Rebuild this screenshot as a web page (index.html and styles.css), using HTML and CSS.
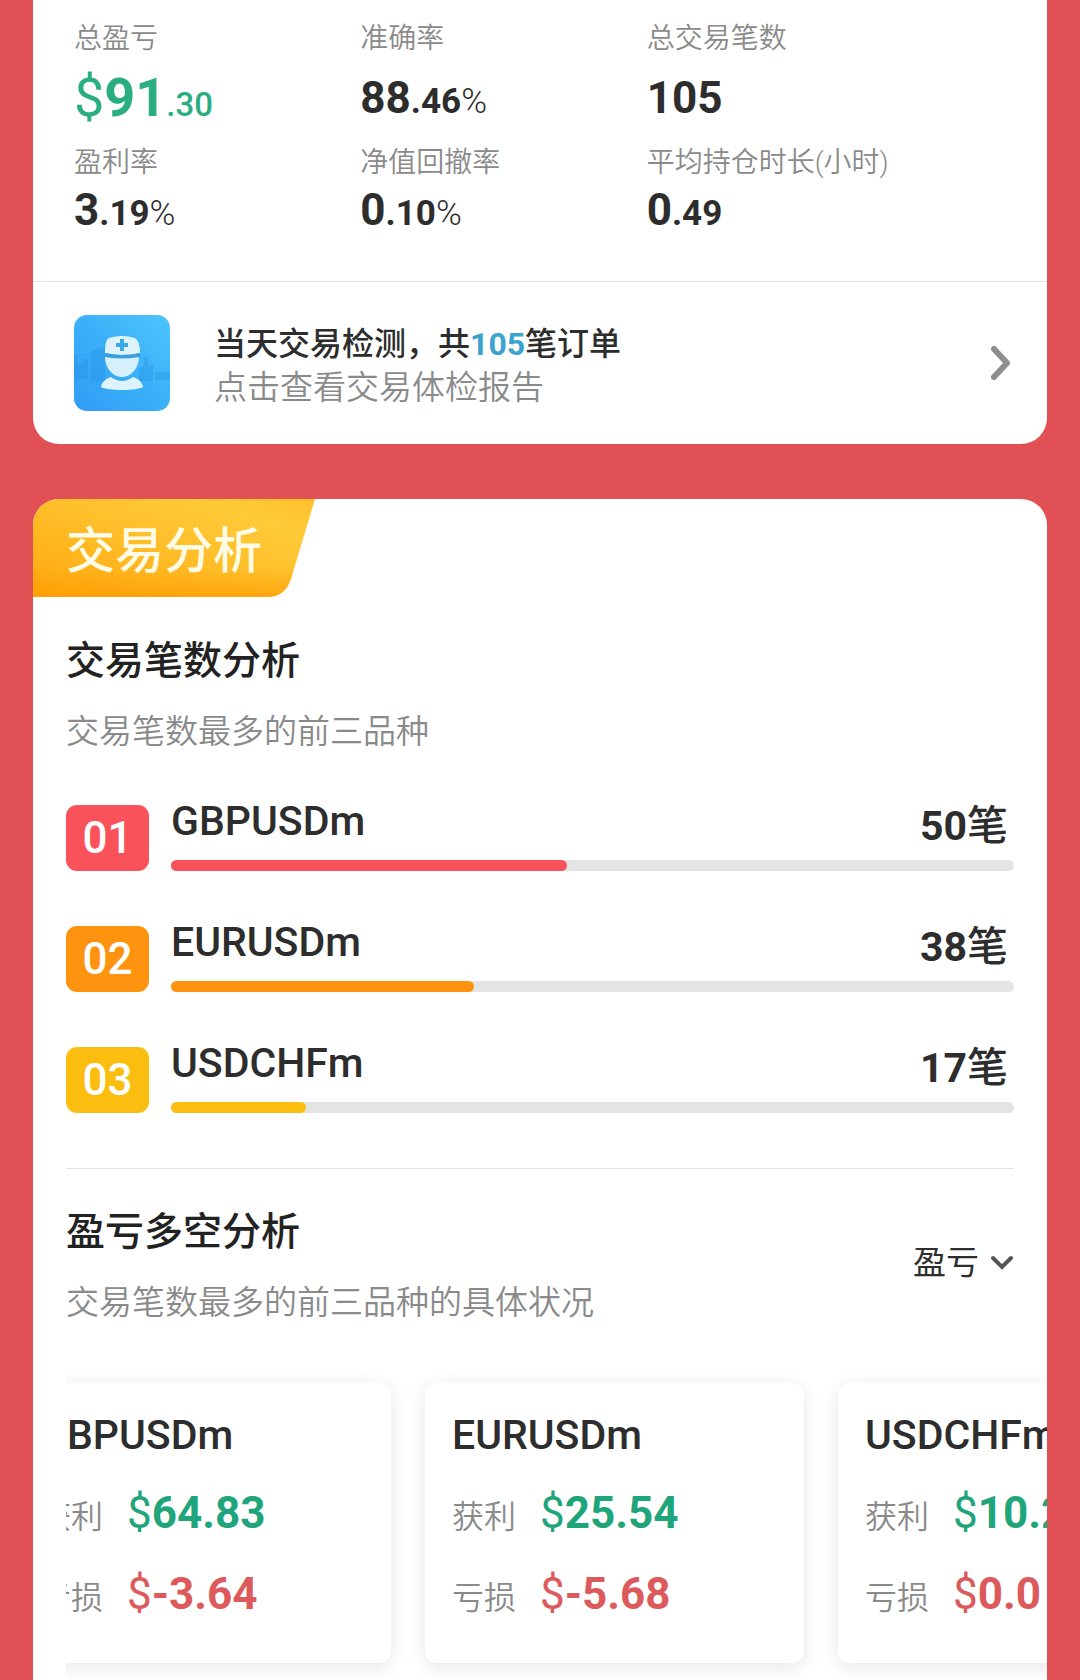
FILE: index.html
```
<!DOCTYPE html>
<html lang="zh-CN">
<head>
    <meta charset="UTF-8">
    <meta name="viewport" content="width=device-width, initial-scale=1.0">
    <title>交易分析</title>
    <link rel="stylesheet" href="styles.css">
</head>
<body>
    <main class="page">
        <section class="card summary">
            <dl class="stats">
                <div class="stat">
                    <dt>总盈亏</dt>
                    <dd class="tall total"><span class="sign">$</span>91<small>.30</small></dd>
                </div>
                <div class="stat">
                    <dt>准确率</dt>
                    <dd class="tall">88<small>.46<i>%</i></small></dd>
                </div>
                <div class="stat">
                    <dt>总交易笔数</dt>
                    <dd class="tall">105</dd>
                </div>
                <div class="stat">
                    <dt>盈利率</dt>
                    <dd>3<small>.19<i>%</i></small></dd>
                </div>
                <div class="stat">
                    <dt>净值回撤率</dt>
                    <dd>0<small>.10<i>%</i></small></dd>
                </div>
                <div class="stat">
                    <dt>平均持仓时长(小时)</dt>
                    <dd>0<small>.49</small></dd>
                </div>
            </dl>

            <a class="report" href="#report">
                <svg class="report-icon" viewBox="0 0 96 96" aria-hidden="true">
                    <defs>
                        <linearGradient id="sky" x1="1" y1="0" x2="0" y2="1">
                            <stop offset="0" stop-color="#4cc5fd"/>
                            <stop offset="0.5" stop-color="#3bb0f8"/>
                            <stop offset="1" stop-color="#2f9cf6"/>
                        </linearGradient>
                    </defs>
                    <rect width="96" height="96" rx="13" fill="url(#sky)"/>
                    <path d="M0 40h4v8h5v-4h5v20H0zM17 35l14-2v34H17zM65 54l5-4v-8h4v8h5v16H65zM81 57h15v8H81z" fill="#2389e0" opacity=".3"/>
                    <path d="M31 38c0-9 1-13 4-15q13-4 26 0c3 2 5 7 5 15q-17 4-35 0z" fill="#dff3fc"/>
                    <path d="M46 24h4v4h4v4h-4v4h-4v-4h-4v-4h4z" fill="#3aa9e6"/>
                    <path d="M31 38q17 4 35 0v5H31z" fill="#3c9fdc"/>
                    <path d="M31 42q17 3 34 0c0 10-7 20-17 20s-17-10-17-20z" fill="#d5effb"/>
                    <path d="M37 62q11 8 22 0c6 2 9 5 10 10-6 4-36 4-42 0 1-5 4-8 10-10z" fill="#dff3fc"/>
                </svg>
                <div class="report-text">
                    <strong>当天交易检测，共<em>105</em>笔订单</strong>
                    <span>点击查看交易体检报告</span>
                </div>
                <svg class="arrow" viewBox="0 0 20 34" aria-hidden="true">
                    <path d="M3 3l13 14L3 31"/>
                </svg>
            </a>
        </section>

        <section class="card analysis">
            <div class="ribbon">
                <svg class="ribbon-bg" viewBox="0 0 282 98" preserveAspectRatio="none" aria-hidden="true">
                    <defs>
                        <linearGradient id="gold" x1="0" y1="1" x2="1" y2="0">
                            <stop offset="0" stop-color="#ffa80e"/>
                            <stop offset="0.5" stop-color="#ffbf2a"/>
                            <stop offset="0.8" stop-color="#ffca38"/>
                            <stop offset="1" stop-color="#ffc02a"/>
                        </linearGradient>
                        <linearGradient id="goldEdge" x1="0" y1="0" x2="0" y2="1">
                            <stop offset="0.7" stop-color="#ff9a00" stop-opacity="0"/>
                            <stop offset="1" stop-color="#ff9a00" stop-opacity=".6"/>
                        </linearGradient>
                    </defs>
                    <path d="M0 0H282L258 80Q252 98 234 98H0z" fill="url(#gold)"/>
                    <path d="M0 0H282L258 80Q252 98 234 98H0z" fill="url(#goldEdge)"/>
                </svg>
                <h1>交易分析</h1>
            </div>

            <div class="block">
                <h2>交易笔数分析</h2>
                <p class="hint">交易笔数最多的前三品种</p>

                <ol class="ranks">
                    <li class="rank red">
                        <span class="badge">01</span>
                        <div class="rank-body">
                            <div class="rank-line"><b>GBPUSDm</b><span><strong>50</strong>笔</span></div>
                            <div class="bar"><div class="fill" style="width: 47%"></div></div>
                        </div>
                    </li>
                    <li class="rank orange">
                        <span class="badge">02</span>
                        <div class="rank-body">
                            <div class="rank-line"><b>EURUSDm</b><span><strong>38</strong>笔</span></div>
                            <div class="bar"><div class="fill" style="width: 36%"></div></div>
                        </div>
                    </li>
                    <li class="rank yellow">
                        <span class="badge">03</span>
                        <div class="rank-body">
                            <div class="rank-line"><b>USDCHFm</b><span><strong>17</strong>笔</span></div>
                            <div class="bar"><div class="fill" style="width: 16%"></div></div>
                        </div>
                    </li>
                </ol>
            </div>

            <div class="block split">
                <div>
                    <h2>盈亏多空分析</h2>
                    <p class="hint">交易笔数最多的前三品种的具体状况</p>
                </div>
                <label class="picker">
                    <select aria-label="分析类型">
                        <option>盈亏</option>
                        <option>多空</option>
                    </select>
                    <svg viewBox="0 0 24 16" aria-hidden="true">
                        <path d="M3 3l9 9 9-9"/>
                    </svg>
                </label>
            </div>

            <div class="scroller" id="scroller">
                <article class="symbol">
                    <h3>GBPUSDm</h3>
                    <p class="gain"><span>获利</span><b><i>$</i>64.83</b></p>
                    <p class="loss"><span>亏损</span><b><i>$</i>-3.64</b></p>
                </article>
                <article class="symbol">
                    <h3>EURUSDm</h3>
                    <p class="gain"><span>获利</span><b><i>$</i>25.54</b></p>
                    <p class="loss"><span>亏损</span><b><i>$</i>-5.68</b></p>
                </article>
                <article class="symbol">
                    <h3>USDCHFm</h3>
                    <p class="gain"><span>获利</span><b><i>$</i>10.2</b></p>
                    <p class="loss"><span>亏损</span><b><i>$</i>0.0</b></p>
                </article>
            </div>
        </section>
    </main>

    <script>
        // 默认滚动到第二个品种
        document.getElementById('scroller').scrollLeft = 54;
    </script>
</body>
</html>
```
FILE: styles.css
```
:root {
    --red: #e15054;
    --text: #2d2d2d;
    --muted: #8a8a8a;
    --green: #1fa57b;
    --line: #e2e2e2;
}

* {
    box-sizing: border-box;
    margin: 0;
    padding: 0;
}

body {
    font-family: Roboto, "Noto Sans CJK SC", sans-serif;
    background: var(--red);
    color: var(--text);
}

.page {
    display: flex;
    flex-direction: column;
    gap: 55px;
    min-height: 100vh;
    padding: 0 33px;
}

.card {
    background: #fff;
    overflow: hidden;
}

/* 顶部汇总 */
.summary {
    border-radius: 0 0 26px 26px;
}

.stats {
    display: grid;
    grid-template-columns: repeat(3, 1fr);
    padding: 16px 114px 47px 41px;
}

.stat dt {
    font-size: 28px;
    font-weight: 350;
    line-height: 46px;
    color: var(--muted);
    white-space: nowrap;
}

.stat dd {
    height: 48px;
    font-size: 44px;
    font-weight: 700;
    line-height: 48px;
    white-space: nowrap;
}

.stat dd.tall {
    height: 78px;
    line-height: 72px;
}

.stat small {
    font-size: 35px;
}

.stat i {
    font-style: normal;
    font-weight: 300;
}

.stat dd.total {
    font-size: 54px;
    color: #2aae81;
}

.total .sign {
    font-weight: 400;
}

.total small {
    font-size: 33px;
    font-weight: 500;
}

.report {
    display: flex;
    align-items: center;
    padding: 33px 36px 33px 41px;
    border-top: 1px solid var(--line);
    color: inherit;
    text-decoration: none;
}

.report-icon {
    width: 96px;
    height: 96px;
}

.report-text {
    flex: 1;
    margin-left: 44px;
    padding-top: 5px;
    line-height: 44px;
}

.report-text strong,
.report-text span {
    display: block;
}

.report-text strong {
    font-size: 32px;
    font-weight: 500;
}

.report-text em {
    font-style: normal;
    font-weight: 700;
    color: #3ba3d0;
}

.report-text span {
    font-size: 33px;
    font-weight: 350;
    color: var(--muted);
}

.arrow {
    width: 20px;
    height: 34px;
    fill: none;
    stroke: #8e8e8e;
    stroke-width: 6;
    stroke-linecap: round;
    stroke-linejoin: round;
}

/* 交易分析 */
.analysis {
    flex: 1;
    border-radius: 26px 26px 0 0;
}

.ribbon {
    position: relative;
    width: 282px;
    height: 98px;
    padding-left: 33px;
}

.ribbon-bg {
    position: absolute;
    inset: 0;
    width: 100%;
    height: 100%;
}

.ribbon h1 {
    position: relative;
    font-size: 49px;
    font-weight: 500;
    line-height: 106px;
    color: #fffbe6;
}

.block {
    margin: 0 33px;
    padding: 33px 0 55px;
}

h2 {
    font-size: 39px;
    font-weight: 500;
    line-height: 62px;
    color: #222;
}

.hint {
    margin-top: 18px;
    font-size: 33px;
    font-weight: 350;
    line-height: 44px;
    color: var(--muted);
}

.ranks {
    display: flex;
    flex-direction: column;
    gap: 55px;
    margin-top: 51px;
    list-style: none;
}

.rank {
    display: flex;
    gap: 22px;
}

.badge {
    width: 83px;
    height: 66px;
    border-radius: 11px;
    background: var(--color);
    color: #fff;
    font-size: 44px;
    font-weight: 500;
    line-height: 66px;
    text-align: center;
}

.rank-body {
    flex: 1;
}

.rank-line {
    display: flex;
    justify-content: space-between;
    height: 55px;
    padding-right: 6px;
    font-size: 41px;
    font-weight: 500;
}

.rank-line b {
    font-weight: 500;
    line-height: 32px;
}

.rank-line span {
    line-height: 42px;
}

.bar {
    height: 11px;
    border-radius: 6px;
    background: #e4e4e4;
}

.fill {
    height: 100%;
    border-radius: 6px;
    background: var(--color);
}

.red {
    --color: #f9525a;
}

.orange {
    --color: #fd930f;
}

.yellow {
    --color: #fbbe10;
}

.split {
    display: flex;
    align-items: center;
    justify-content: space-between;
    padding: 32px 0 38px;
    border-top: 1px solid var(--line);
}

.picker {
    display: flex;
    align-items: center;
    gap: 11px;
}

.picker select {
    appearance: none;
    border: 0;
    background: none;
    font-family: inherit;
    font-size: 33px;
    line-height: 44px;
    color: var(--text);
}

.picker svg {
    width: 24px;
    height: 16px;
    fill: none;
    stroke: #555;
    stroke-width: 4;
    stroke-linecap: round;
}

/* 品种卡片，横向滚动 */
.scroller {
    display: flex;
    gap: 34px;
    margin-left: 33px;
    padding: 20px 33px 17px 0;
    overflow-x: auto;
    scrollbar-width: none;
}

.symbol {
    flex: 0 0 379px;
    padding: 28px 27px 28px;
    border-radius: 12px;
    background: #fff;
    box-shadow: 0 4px 18px rgba(0, 0, 0, 0.1);
}

.symbol h3 {
    margin-bottom: 14px;
    font-size: 41px;
    font-weight: 500;
    line-height: 48px;
}

.symbol p {
    display: flex;
    align-items: baseline;
    gap: 24px;
    height: 81px;
    line-height: 81px;
}

.symbol span {
    font-size: 32px;
    font-weight: 350;
    color: var(--muted);
}

.symbol b {
    font-size: 44px;
}

.symbol i {
    font-style: normal;
    font-weight: 400;
}

.gain b {
    color: var(--green);
}

.loss b {
    color: #dc5a5c;
}
```
